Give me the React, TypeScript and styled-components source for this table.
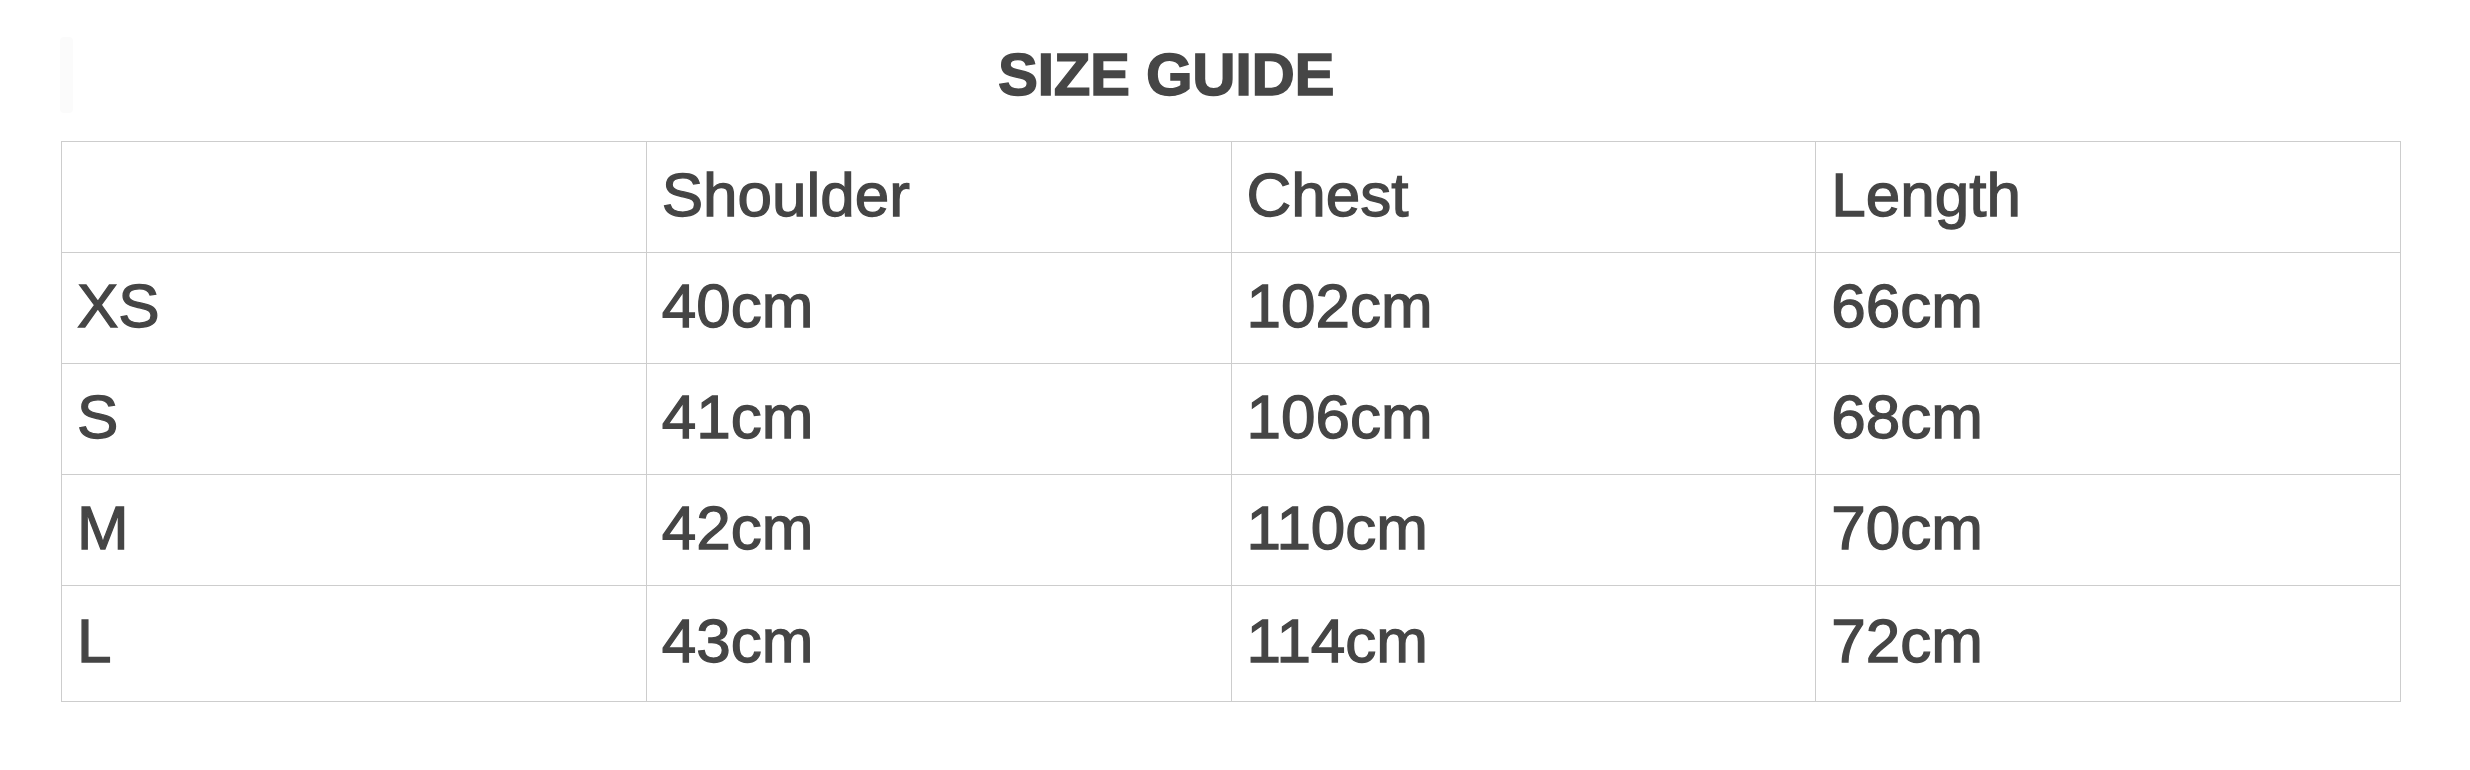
import styled, { createGlobalStyle } from "styled-components";

const GlobalStyle = createGlobalStyle`
    html, body {
        margin: 0;
        padding: 0;
        background: #ffffff;
    }
    body {
        font-family: "Liberation Sans", Arial, Helvetica, sans-serif;
        color: #454545;
    }
`

const Page = styled.div`
    width: 2470px;
    height: 770px;
    overflow: hidden;
`

const Header = styled.div`
    display: flex;
    align-items: flex-start;
    height: 141px;
    padding-left: 60px;
    box-sizing: border-box;
`

const Ghost = styled.div`
    width: 13px;
    height: 76px;
    margin-top: 37px;
    background: #fbfbfb;
    border-radius: 4px;
`

const Title = styled.h1`
    flex: none;
    width: 2186px;
    margin: 40px 0 0;
    font-size: 60px;
    line-height: 69px;
    font-weight: 700;
    letter-spacing: -0.4px;
    text-align: center;
    color: #464646;
    -webkit-text-stroke: 1.4px #464646;
`

const Table = styled.table`
    margin-left: 61px;
    width: 2340px;
    border-collapse: collapse;
    table-layout: fixed;
`

const Row = styled.tr<{ $tall?: boolean }>`
    height: ${(p) => (p.$tall ? "116px" : "111px")};
`

const Cell = styled.td`
    border: 1px solid #cdcdcd;
    padding: 0 0 6px 15px;
    font-size: 62px;
    font-weight: 400;
    color: #454545;
    vertical-align: middle;
    -webkit-text-stroke: 1.3px #454545;
`

const columns = ["", "Shoulder", "Chest", "Length"]

const sizes = [
    ["XS", "40cm", "102cm", "66cm"],
    ["S", "41cm", "106cm", "68cm"],
    ["M", "42cm", "110cm", "70cm"],
    ["L", "43cm", "114cm", "72cm"],
]

function App() {
    return (
        <>
            <GlobalStyle />
            <Page>
                <Header>
                    <Ghost />
                    <Title>SIZE GUIDE</Title>
                </Header>
                <Table>
                    <tbody>
                        <Row>
                            {columns.map((c, i) => <Cell key={i}>{c}</Cell>)}
                        </Row>
                        {sizes.map((row, r) => (
                            <Row key={row[0]} $tall={r === sizes.length - 1}>
                                {row.map((v, i) => <Cell key={i}>{v}</Cell>)}
                            </Row>
                        ))}
                    </tbody>
                </Table>
            </Page>
        </>
    )
}

export default App;
